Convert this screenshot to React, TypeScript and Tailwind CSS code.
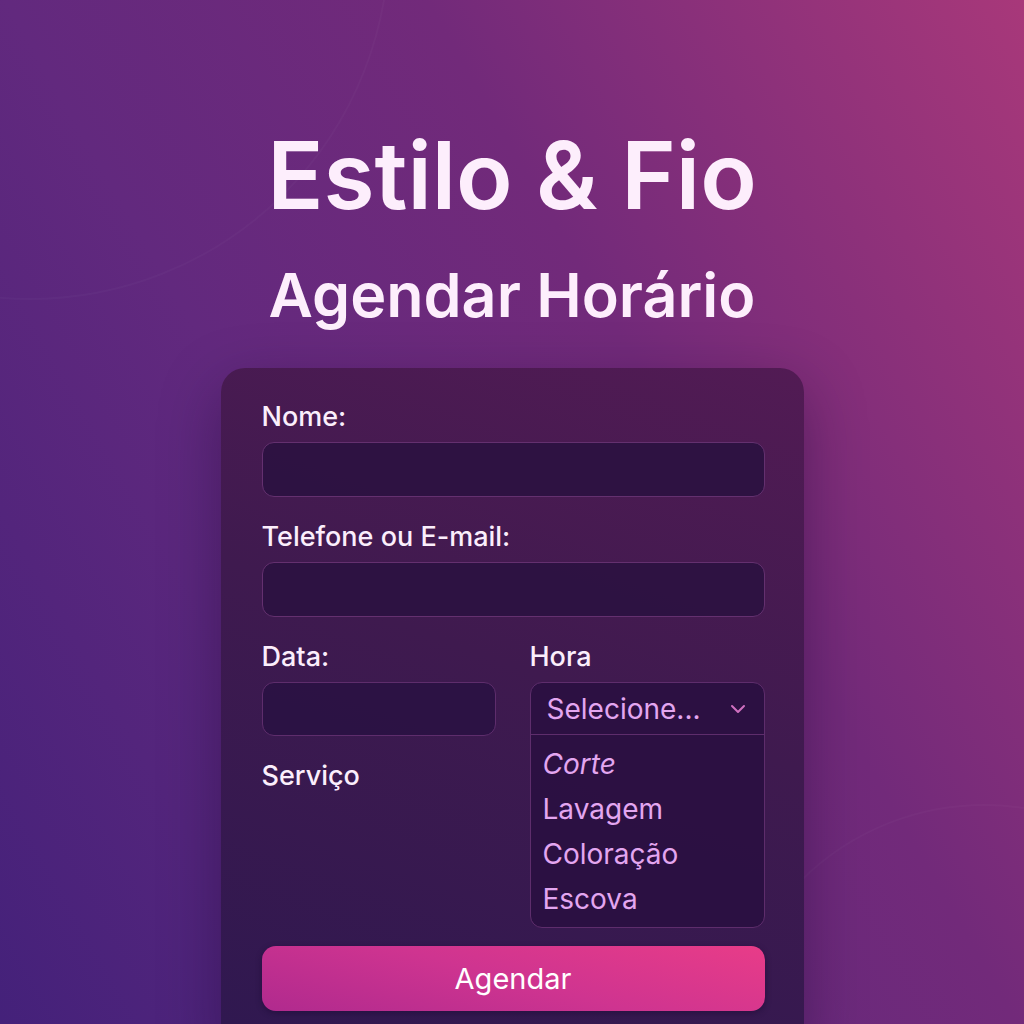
import { ChevronDown } from "lucide-react";

const font = { fontFamily: "Inter, 'Noto Sans', sans-serif" };

function Field({ label }: { label: string }) {
  return (
    <div className="flex flex-col">
      <label className="text-[27px] font-medium leading-[32px] text-[#fbeefc]">{label}</label>
      <input
        type="text"
        className="mt-[9px] h-[55px] w-full rounded-[12px] border border-[#64306f] bg-[#2b1240]/90 outline-none"
      />
    </div>
  );
}

export default function App() {
  const services = ["Corte", "Lavagem", "Coloração", "Escova"];

  return (
    <main
      className="relative h-[1024px] w-[1024px] overflow-hidden bg-[linear-gradient(60deg,#44217a_0%,#62297e_37%,#722a7a_63%,#a8387a_100%)]"
      style={font}
    >
      {/* faint decorative arcs */}
      <div className="pointer-events-none absolute -left-[330px] -top-[420px] h-[720px] w-[720px] rounded-full border-2 border-white/[0.025]" />
      <div className="pointer-events-none absolute -bottom-[300px] -right-[220px] h-[520px] w-[520px] rounded-full border-2 border-white/[0.025]" />

      <div className="relative flex flex-col items-center">
        <h1 className="mt-[125px] text-[93px] font-semibold leading-[100px] text-[#fdeefc]">
          Estilo &amp; Fio
        </h1>
        <h2 className="mt-[34px] text-[61px] font-semibold leading-[72px] text-[#fdeefc]">
          Agendar Horário
        </h2>

        <form className="mt-[37px] w-[583px] rounded-[24px] bg-[linear-gradient(200deg,#521b54_0%,#3f1a4f_45%,#2f1850_100%)] pb-[40px] pl-[41px] pr-[39px] pt-[33px] shadow-[0_20px_60px_rgba(20,5,40,0.35)]">
          <div className="flex flex-col gap-[24px]">
            <Field label="Nome:" />
            <Field label="Telefone ou E-mail:" />
          </div>

          <div className="mt-[24px] grid grid-cols-[234px_235px] gap-x-[34px]">
            <div className="flex flex-col">
              <span className="text-[27px] font-medium leading-[32px] text-[#fbeefc]">Data:</span>
              <input
                type="text"
                className="mt-[9px] h-[54px] w-full rounded-[12px] border border-[#5e2d6c] bg-[#2a1242]/90 outline-none"
              />
              <span className="mt-[24px] text-[27px] font-medium leading-[32px] text-[#fbeefc]">Serviço</span>
            </div>

            <div className="flex flex-col">
              <span className="text-[27px] font-medium leading-[32px] text-[#fbeefc]">Hora</span>
              <div className="mt-[9px] overflow-hidden rounded-[12px] border border-[#5e2d6c] bg-[#2a1040]/90">
                <div className="flex h-[52px] items-center justify-between border-b border-[#5e2d6c] pl-[16px] pr-[14px]">
                  <span className="text-[28px] leading-[32px] text-[#e3a6f0]">Selecione...</span>
                  <ChevronDown className="h-[24px] w-[24px] text-[#d070c0]" strokeWidth={2} />
                </div>
                <ul className="flex flex-col pb-[5px] pl-[12px] pt-[7px]">
                  {services.map((s, i) => (
                    <li
                      key={s}
                      className={`text-[28px] leading-[45px] text-[#e3a6f0] ${i === 0 ? "italic" : ""}`}
                    >
                      {s}
                    </li>
                  ))}
                </ul>
              </div>
            </div>
          </div>

          <button
            type="button"
            className="mt-[18px] flex h-[65px] w-full items-center justify-center rounded-[14px] bg-[linear-gradient(15deg,#b02a8e_0%,#cf3490_50%,#e83c88_100%)] text-[29px] text-white shadow-[0_2px_6px_rgba(20,5,40,0.4)]"
          >
            Agendar
          </button>
        </form>
      </div>
    </main>
  );
}
